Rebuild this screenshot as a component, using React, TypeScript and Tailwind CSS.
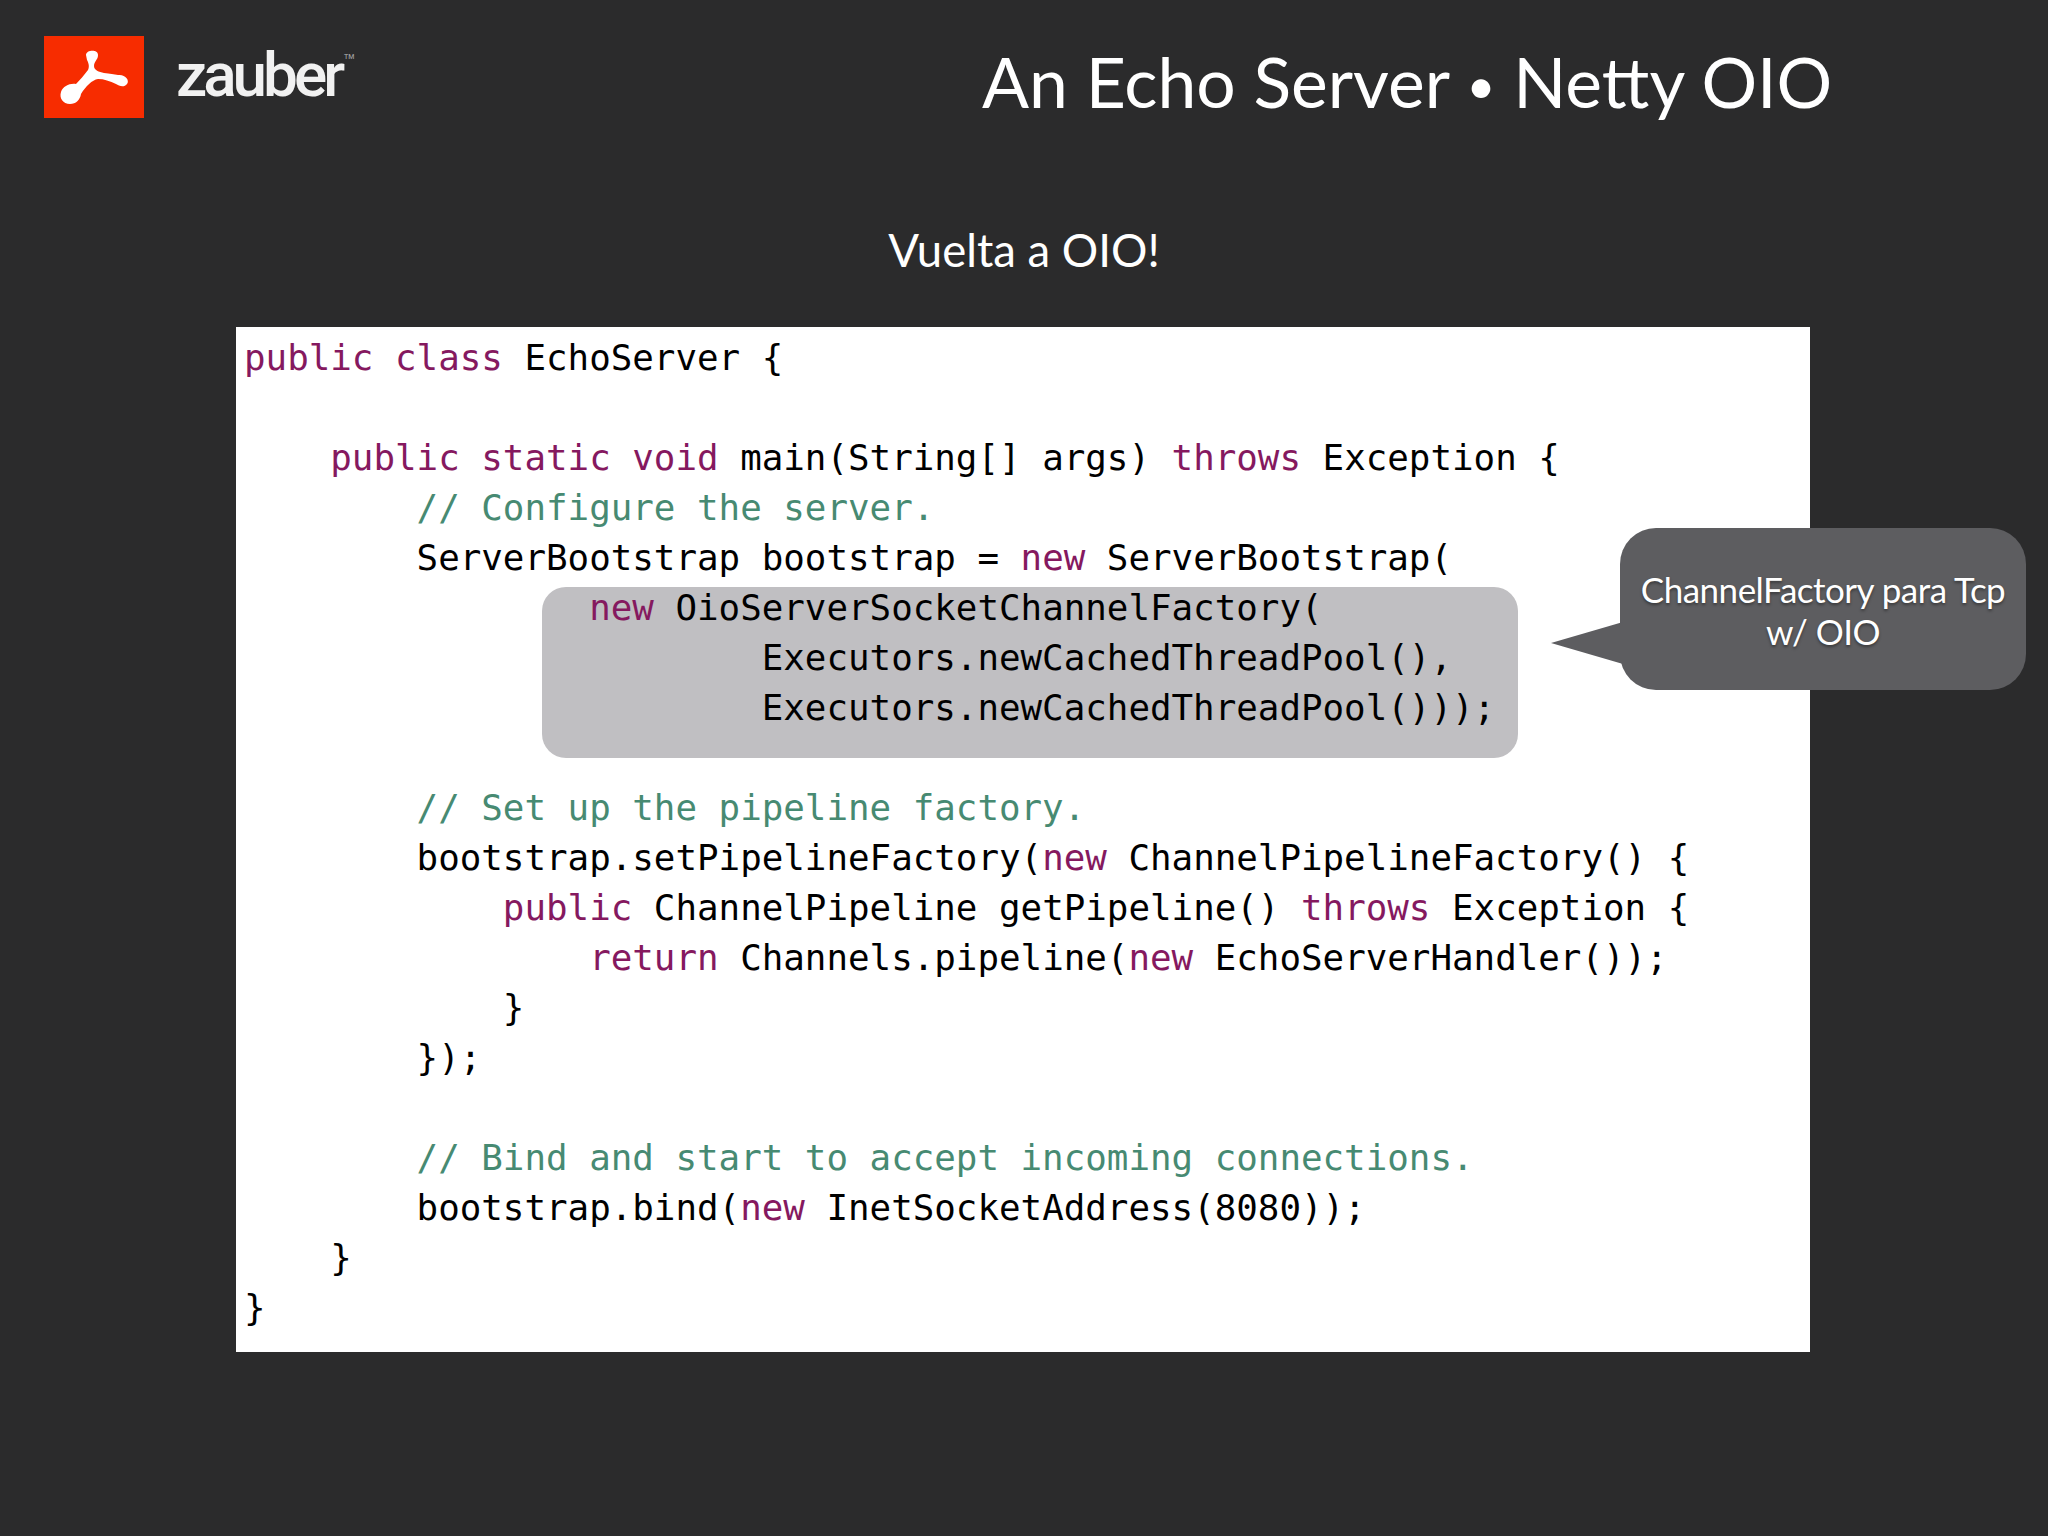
import React from "react";

const K = ({ children }: { children: React.ReactNode }) => <span className="text-[#85195f]">{children}</span>;
const C = ({ children }: { children: React.ReactNode }) => <span className="text-[#478a72]">{children}</span>;

const Line = ({ children }: { children?: React.ReactNode }) => <div className="h-[50px] whitespace-pre">{children}</div>;

const Logo = () => (
  <div className="flex items-center gap-8 w-[298px] shrink-0">
    <div className="w-[100px] h-[82px] shrink-0 bg-[#f72c00]">
      <svg viewBox="0 0 100 82" className="w-full h-full">
        <path
          d="M42 19 C42 14 54 13 54 19 C54 24 50 25 50 30 C50 34 55 36 60 37 C66 38 70 38 74 39 C81 38 86 44 83 48 C80 52 75 50 72 48 C66 45 60 43 54 43 C48 44 42 50 37 58 C36 64 32 68 26 68 C19 68 15 62 17 56 C19 50 26 47 32 48 C36 44 40 39 44 34 C46 30 44 26 43 24 Z"
          fill="#fff"
        />
      </svg>
    </div>
    <div className="relative text-[62px] leading-none font-medium text-[#f1f1f1] tracking-[-4px] font-['Roboto',sans-serif] -mt-1">
      zauber
      <span className="absolute left-full top-[10px] ml-[3px] text-[7px] leading-none tracking-normal text-[#9a9a9a]">TM</span>
    </div>
  </div>
);

const Bubble = () => (
  <div className="absolute left-[1620px] top-[528px] w-[406px] h-[162px] rounded-[36px] bg-[#5d5d60] flex items-center justify-center">
    <svg viewBox="0 0 72 42" className="absolute left-[-69px] top-[94px] w-[72px] h-[42px]">
      <path d="M0 21 L72 0 L72 42 Z" fill="#5d5d60" />
    </svg>
    <p className="mt-[2px] text-center text-[35px] leading-[42px] text-white [text-shadow:0_2px_3px_rgba(0,0,0,0.4)] tracking-[-0.5px] font-['Lato',sans-serif]">
      ChannelFactory para Tcp
      <br />
      w/ OIO
    </p>
  </div>
);

const Code = () => (
  <div className="relative bg-white w-[1574px] h-[1025px] ml-[236px] mt-[51px]">
    <div className="absolute left-[306px] top-[260px] w-[976px] h-[171px] rounded-[24px] bg-[#c0bfc2]" />
    <div className="relative pl-[8px] pt-[6px] text-[35.85px] leading-[50px] text-black font-['DejaVu_Sans_Mono',monospace]">
      <Line><K>public class</K> EchoServer {"{"}</Line>
      <Line />
      <Line>{"    "}<K>public static void</K> main(String[] args) <K>throws</K> Exception {"{"}</Line>
      <Line>{"        "}<C>// Configure the server.</C></Line>
      <Line>{"        "}ServerBootstrap bootstrap = <K>new</K> ServerBootstrap(</Line>
      <Line>{"                "}<K>new</K> OioServerSocketChannelFactory(</Line>
      <Line>{"                        "}Executors.newCachedThreadPool(),</Line>
      <Line>{"                        "}Executors.newCachedThreadPool()));</Line>
      <Line />
      <Line>{"        "}<C>// Set up the pipeline factory.</C></Line>
      <Line>{"        "}bootstrap.setPipelineFactory(<K>new</K> ChannelPipelineFactory() {"{"}</Line>
      <Line>{"            "}<K>public</K> ChannelPipeline getPipeline() <K>throws</K> Exception {"{"}</Line>
      <Line>{"                "}<K>return</K> Channels.pipeline(<K>new</K> EchoServerHandler());</Line>
      <Line>{"            }"}</Line>
      <Line>{"        });"}</Line>
      <Line />
      <Line>{"        "}<C>// Bind and start to accept incoming connections.</C></Line>
      <Line>{"        "}bootstrap.bind(<K>new</K> InetSocketAddress(8080));</Line>
      <Line>{"    }"}</Line>
      <Line>{"}"}</Line>
    </div>
  </div>
);

export default function App() {
  return (
    <div className="relative w-[2048px] h-[1536px] overflow-hidden bg-[#2b2b2c] font-['Lato',sans-serif]">
      <header className="flex items-center h-[118px] pt-[36px] pl-[44px]">
        <Logo />
        <h1 className="ml-[640px] mt-[10px] text-[69.6px] leading-none text-white whitespace-nowrap">
          An Echo Server <span className="text-[50px] align-[4px]">•</span> Netty OIO
        </h1>
      </header>
      <h2 className="mt-[106px] text-center text-[45.5px] leading-[52px] text-white">Vuelta a OIO!</h2>
      <Code />
      <Bubble />
    </div>
  );
}
